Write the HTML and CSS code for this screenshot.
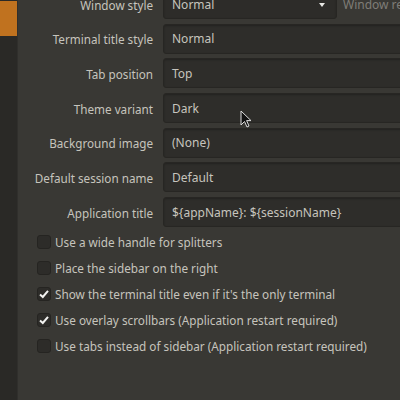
FILE: index.html
```html
<!DOCTYPE html>
<html>
<head>
<meta charset="utf-8">
<link rel="stylesheet" href="styles.css">
</head>
<body>
<div class="app">
  <aside class="sidebar"><div class="active"></div></aside>
  <main class="content">
    <div class="form">
      <div class="label">Window style</div>
      <div class="field-line">
        <div class="input combo">Normal<span class="arrow"></span></div>
        <span class="dim">Window resize increment</span>
      </div>
      <div class="label">Terminal title style</div>
      <div class="input wide">Normal</div>
      <div class="label">Tab position</div>
      <div class="input wide">Top</div>
      <div class="label">Theme variant</div>
      <div class="input wide">Dark</div>
      <div class="label">Background image</div>
      <div class="input wide">(None)</div>
      <div class="label">Default session name</div>
      <div class="input wide">Default</div>
      <div class="label">Application title</div>
      <div class="input wide">${appName}: ${sessionName}</div>
    </div>
    <div class="checks">
      <div class="check"><span class="box"></span>Use a wide handle for splitters</div>
      <div class="check"><span class="box"></span>Place the sidebar on the right</div>
      <div class="check"><span class="box on"><svg viewBox="0 0 14 14" width="14" height="14"><path d="M3 7.5 L5.8 10 L11 3.8" fill="none" stroke="#f2f2f0" stroke-width="2"/></svg></span>Show the terminal title even if it's the only terminal</div>
      <div class="check"><span class="box on"><svg viewBox="0 0 14 14" width="14" height="14"><path d="M3 7.5 L5.8 10 L11 3.8" fill="none" stroke="#f2f2f0" stroke-width="2"/></svg></span>Use overlay scrollbars (Application restart required)</div>
      <div class="check"><span class="box"></span>Use tabs instead of sidebar (Application restart required)</div>
    </div>
    <svg class="cursor" viewBox="0 0 12 18" width="12" height="18"><path d="M1 1 L1 15 L4.5 11.5 L7 17 L9 16 L6.6 10.6 L11 10.6 Z" fill="#111" stroke="#ddd" stroke-width="1"/></svg>
  </main>
</div>
</body>
</html>
```
FILE: styles.css
```css
html, body {
  margin: 0;
  padding: 0;
  overflow: hidden;
}
body {
  background: #393834;
  font-family: "Noto Sans", "Open Sans", sans-serif;
  font-size: 12px;
  color: #c6c4bd;
}
.app {
  display: flex;
  width: 400px;
  height: 400px;
  overflow: hidden;
}
.sidebar {
  width: 17px;
  flex: none;
  background: #2a2926;
  border-right: 1px solid #302f2c;
  padding-top: 1px;
}
.active {
  height: 35px;
  background: #c0721f;
}
.content {
  flex: 1;
  position: relative;
  overflow: hidden;
  background: #393834;
}
.form {
  display: grid;
  grid-template-columns: 135px 1fr;
  column-gap: 10px;
  row-gap: 4.7px;
  margin-top: -11px;
}
.label {
  text-align: right;
  align-self: center;
  white-space: nowrap;
  font-size: 11.7px;
  padding-top: 1px;
}
.input {
  height: 30px;
  box-sizing: border-box;
  background: #2e2d2a;
  border: 1px solid #272623;
  border-radius: 3px;
  box-shadow: inset 0 1px 2px rgba(0,0,0,0.25);
  display: flex;
  align-items: center;
  padding-left: 8px;
  white-space: nowrap;
}
.wide {
  margin-right: -10px;
}
.field-line {
  display: flex;
  align-items: center;
  gap: 6px;
  white-space: nowrap;
}
.combo {
  width: 174px;
  flex: none;
  position: relative;
  background: #2d2c29;
}
.arrow {
  position: absolute;
  right: 11px;
  top: 13px;
  width: 0;
  height: 0;
  border-left: 3.5px solid transparent;
  border-right: 3.5px solid transparent;
  border-top: 4px solid #e8e8e4;
}
.dim {
  color: #7f7d77;
}
.checks {
  display: flex;
  flex-direction: column;
  padding-left: 19px;
  margin-top: 1.5px;
  font-size: 11.75px;
}
.check {
  height: 26px;
  display: flex;
  align-items: center;
  gap: 4px;
  white-space: nowrap;
}
.box {
  width: 14px;
  height: 14px;
  box-sizing: border-box;
  background: #2d2c29;
  border: 1px solid #252421;
  border-radius: 3px;
  flex: none;
  display: flex;
}
.box.on svg {
  display: block;
  margin: -1px;
}
.cursor {
  position: absolute;
  left: 222px;
  top: 110px;
}
```
